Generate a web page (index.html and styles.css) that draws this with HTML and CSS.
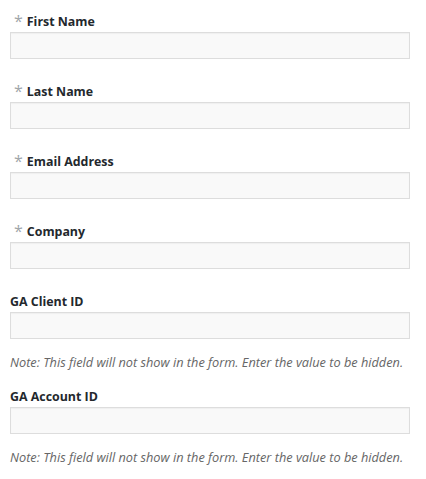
FILE: index.html
```html
<!DOCTYPE html>
<html>
<head>
<meta charset="utf-8">
<link rel="stylesheet" href="styles.css">
</head>
<body>
<form class="form">
  <div class="field">
    <label class="label"><span class="req">*</span>First Name</label>
    <input class="input" type="text">
  </div>
  <div class="field">
    <label class="label"><span class="req">*</span>Last Name</label>
    <input class="input" type="text">
  </div>
  <div class="field">
    <label class="label"><span class="req">*</span>Email Address</label>
    <input class="input" type="text">
  </div>
  <div class="field">
    <label class="label"><span class="req">*</span>Company</label>
    <input class="input" type="text">
  </div>
  <div class="field field-note">
    <label class="label">GA Client ID</label>
    <input class="input" type="text">
    <p class="note">Note: This field will not show in the form. Enter the value to be hidden.</p>
  </div>
  <div class="field field-note">
    <label class="label">GA Account ID</label>
    <input class="input" type="text">
    <p class="note">Note: This field will not show in the form. Enter the value to be hidden.</p>
  </div>
</form>
</body>
</html>
```
FILE: styles.css
```css
html, body {
  margin: 0;
  padding: 0;
  background: #fff;
}
body {
  font-family: "Open Sans", "Liberation Sans", sans-serif;
  color: #32373c;
}
.form {
  width: 400px;
  padding: 10px 0 0 10px;
}
.field {
  display: flex;
  flex-direction: column;
  margin-bottom: 21px;
}
.field-note {
  margin-bottom: 0;
}
.label {
  display: flex;
  align-items: flex-start;
  height: 20px;
  padding-top: 2px;
  line-height: 20px;
  font-size: 12.4px;
  font-weight: 700;
  margin-bottom: 0;
  color: #23282d;
}
.req {
  color: #a0a5aa;
  font-weight: 400;
  font-size: 16px;
  margin: -1px 4px 0 4px;
  line-height: 20px;
}
.input {
  box-sizing: border-box;
  width: 400px;
  height: 27px;
  margin: 0;
  border: 1px solid #dddddd;
  background: #f9f9f9;
  box-shadow: inset 0 1px 1px rgba(0,0,0,0.04);
  outline: none;
  padding: 0 6px;
}
.note {
  margin: 13px 0;
  height: 20px;
  line-height: 20px;
  font-size: 12.75px;
  font-style: italic;
  color: #666;
  white-space: nowrap;
}
```
